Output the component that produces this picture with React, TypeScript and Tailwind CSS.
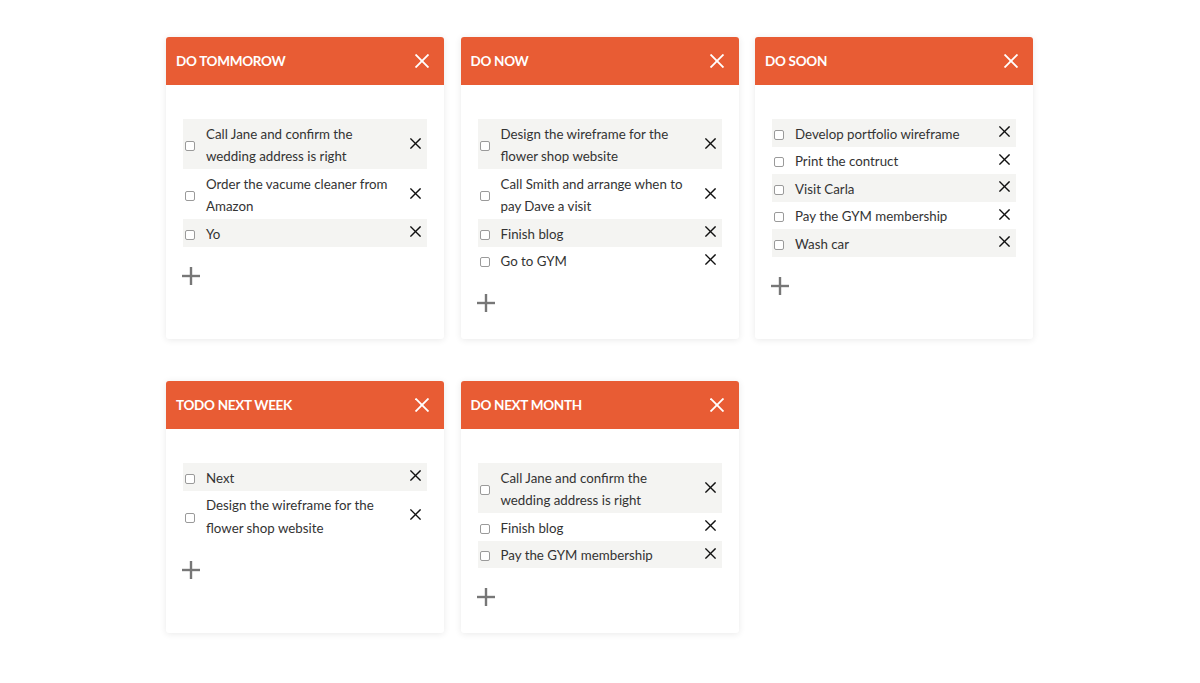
import React from 'react';

type Column = { title: string; items: string[] };

const rows: Column[][] = [
  [
    {
      title: 'DO TOMMOROW',
      items: ['Call Jane and confirm the wedding address is right', 'Order the vacume cleaner from Amazon', 'Yo'],
    },
    {
      title: 'DO NOW',
      items: [
        'Design the wireframe for the flower shop website',
        'Call Smith and arrange when to pay Dave a visit',
        'Finish blog',
        'Go to GYM',
      ],
    },
    {
      title: 'DO SOON',
      items: ['Develop portfolio wireframe', 'Print the contruct', 'Visit Carla', 'Pay the GYM membership', 'Wash car'],
    },
  ],
  [
    {
      title: 'TODO NEXT WEEK',
      items: ['Next', 'Design the wireframe for the flower shop website'],
    },
    {
      title: 'DO NEXT MONTH',
      items: ['Call Jane and confirm the wedding address is right', 'Finish blog', 'Pay the GYM membership'],
    },
  ],
];

const Cross = ({ size, stroke, color }: { size: number; stroke: number; color: string }) => (
  <svg width={size} height={size} viewBox="0 0 12 12" fill="none" stroke={color} strokeWidth={stroke} strokeLinecap="square">
    <line x1="1" y1="1" x2="11" y2="11" />
    <line x1="11" y1="1" x2="1" y2="11" />
  </svg>
);

const Card = ({ col }: { col: Column }) => (
  <div className="bg-white rounded-[3px] shadow-[0_1px_7px_rgba(0,0,0,0.09)] flex flex-col">
    {/* Header */}
    <div className="h-[48px] bg-[#e85c34] rounded-t-[3px] flex items-center justify-between pl-[10px] pr-[15px]">
      <span className="text-white font-bold text-[13.5px] tracking-[-0.3px] pt-[1px]">{col.title}</span>
      <Cross size={14} stroke={1.6} color="#ffffff" />
    </div>

    {/* Body */}
    <div className="pt-[34px] px-[17px] pb-[27px] flex flex-col">
      <ul className="flex flex-col">
        {col.items.map((item, i) => (
          <li
            key={i}
            className={`flex items-center pl-[2px] pr-[6px] pt-[3.5px] pb-[1.5px] ${i % 2 === 0 ? 'bg-[#f4f4f2]' : 'bg-white'}`}
          >
            <span className="w-[10px] h-[10px] shrink-0 rounded-[2px] border border-[#9a9a9a] bg-white mr-[11px] mt-[2px]" />
            <span className="flex-1 text-[13.3px] leading-[22.5px] text-[#333333]">{item}</span>
            <span className="ml-[11px] self-center -mt-[4px]">
              <Cross size={11} stroke={1.5} color="#111111" />
            </span>
          </li>
        ))}
      </ul>
      <button className="mt-[20px] -ml-[1px] w-[18px] h-[18px]">
        <svg width="18" height="18" viewBox="0 0 18 18" stroke="#777777" strokeWidth="2.4">
          <line x1="9" y1="0" x2="9" y2="18" />
          <line x1="0" y1="9" x2="18" y2="9" />
        </svg>
      </button>
    </div>
  </div>
);

export default function App() {
  return (
    <div className="min-h-screen bg-white pt-[37px] font-['Lato','Liberation_Sans',sans-serif]">
      <div className="w-[868px] mx-auto flex flex-col gap-[42px]">
        {rows.map((row, r) => (
          <div key={r} className="grid grid-cols-[repeat(3,278px)] gap-x-[16.5px]">
            {row.map((col) => (
              <Card key={col.title} col={col} />
            ))}
          </div>
        ))}
      </div>
    </div>
  );
}
